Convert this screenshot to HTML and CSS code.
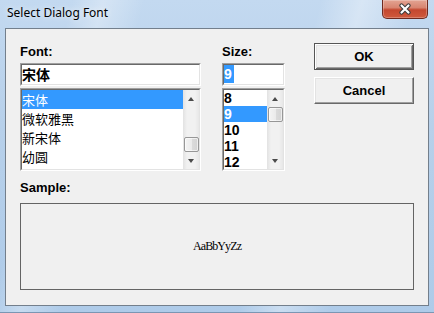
FILE: index.html
```html
<!DOCTYPE html>
<html lang="en">
<head>
  <meta charset="UTF-8" />
  <title>Select Dialog Font</title>
  <link rel="stylesheet" href="styles.css">
</head>
<body>
  <div class="window">
    <div class="titlebar">
      <span class="title">Select Dialog Font</span>
      <div class="close-btn">
        <svg width="14" height="12" viewBox="0 0 14 12">
          <path d="M3.5 2.5 L10.5 9.5 M10.5 2.5 L3.5 9.5" stroke="#3a3a3a" stroke-width="4.2" stroke-linecap="round" fill="none"/>
          <path d="M3.5 2.5 L10.5 9.5 M10.5 2.5 L3.5 9.5" stroke="#fff" stroke-width="2.2" stroke-linecap="round" fill="none"/>
        </svg>
      </div>
    </div>

    <div class="client">
      <div class="top-row">
        <div class="font-col">
          <div class="field-label">Font:</div>
          <div class="sunken edit">
            <div class="sunken-inner cjk-edit">宋体</div>
          </div>
          <div class="sunken listbox">
            <div class="sunken-inner">
              <ul class="items font-items">
                <li class="selected">宋体</li>
                <li>微软雅黑</li>
                <li>新宋体</li>
                <li>幼圆</li>
              </ul>
              <div class="scrollbar">
                <div class="sb-btn up"></div>
                <div class="sb-track at-end"><div class="thumb"></div></div>
                <div class="sb-btn down"></div>
              </div>
            </div>
          </div>
        </div>

        <div class="size-col">
          <div class="field-label">Size:</div>
          <div class="sunken edit">
            <div class="sunken-inner num-edit"><span class="sel-text">9</span></div>
          </div>
          <div class="sunken listbox">
            <div class="sunken-inner">
              <ul class="items size-items">
                <li>8</li>
                <li class="selected">9</li>
                <li>10</li>
                <li>11</li>
                <li>12</li>
              </ul>
              <div class="scrollbar">
                <div class="sb-btn up"></div>
                <div class="sb-track"><div class="thumb"></div></div>
                <div class="sb-btn down"></div>
              </div>
            </div>
          </div>
        </div>

        <div class="button-col">
          <button class="btn default">OK</button>
          <button class="btn">Cancel</button>
        </div>
      </div>

      <div class="field-label sample-label">Sample:</div>
      <div class="sample-box">AaBbYyZz</div>
    </div>
  </div>
</body>
</html>
```

FILE: styles.css
```css
* {
  box-sizing: border-box;
  margin: 0;
  padding: 0;
}

html, body {
  width: 434px;
  height: 313px;
  overflow: hidden;
}

body {
  font-family: "Liberation Sans", Arial, sans-serif;
  background: #b8d1ec;
  color: #000;
}

.window {
  width: 434px;
  height: 313px;
  display: flex;
  flex-direction: column;
  background:
    linear-gradient(105deg, transparent 14%, rgba(255,255,255,0.3) 20%, transparent 28%,
                    transparent 62%, rgba(255,255,255,0.35) 70%, transparent 80%),
    linear-gradient(180deg, #c3d9f0 0%, #b7d0ea 40%, #aecbe9 100%);
  box-shadow: inset 0 -1px 0 #7b96b3;
}

/* title bar */

.titlebar {
  height: 28px;
  display: flex;
  justify-content: space-between;
  align-items: flex-start;
  padding: 0 6px 0 7px;
}

.title {
  font-family: "Noto Sans", "Open Sans", sans-serif;
  font-size: 12px;
  line-height: 16px;
  margin-top: 5px;
  text-shadow: 0 0 6px rgba(255, 255, 255, 0.9);
}

.close-btn {
  width: 46px;
  height: 19px;
  border: 1px solid #6e2a20;
  border-top: none;
  border-radius: 0 0 5px 5px;
  background: linear-gradient(180deg, #e3a493 0%, #d88571 42%, #c4472f 55%, #cf5a3d 100%);
  box-shadow: inset 0 0 0 1px rgba(255, 255, 255, 0.25);
  display: flex;
  align-items: center;
  justify-content: center;
}

/* client area */

.client {
  height: 278px;
  margin: 0 5px;
  border: 1px solid #737f8c;
  background: #f0f0f0;
  padding: 14px 14px 0 14px;
}

.top-row {
  display: flex;
}

.font-col {
  width: 181px;
}

.size-col {
  width: 63px;
  margin-left: 21px;
}

.button-col {
  width: 100px;
  margin-left: 29px;
  display: flex;
  flex-direction: column;
  gap: 7px;
}

.field-label {
  font-weight: bold;
  font-size: 13px;
  line-height: 18px;
  margin-bottom: 2px;
}

/* sunken 3d boxes */

.sunken {
  border: 1px solid;
  border-color: #a0a0a0 #fff #fff #a0a0a0;
  background: #fff;
}

.sunken-inner {
  height: 100%;
  border: 1px solid;
  border-color: #696969 #e3e3e3 #e3e3e3 #696969;
}

.edit {
  height: 23px;
  margin-bottom: 2px;
}

.cjk-edit {
  font-family: "Noto Sans CJK SC", sans-serif;
  font-weight: bold;
  font-size: 14px;
  line-height: 19px;
}

.num-edit {
  font-weight: bold;
  font-size: 14px;
  line-height: 18px;
}

.sel-text {
  display: inline-block;
  background: #3399ff;
  color: #fff;
  padding-right: 2px;
}

.listbox {
  height: 83px;
}

.listbox .sunken-inner {
  display: flex;
  overflow: hidden;
}

.items {
  flex: 1;
  list-style: none;
}

.font-items li {
  height: 19px;
  line-height: 19px;
  font-family: "Noto Sans CJK SC", sans-serif;
  font-size: 13px;
  overflow: hidden;
}

.size-items li {
  height: 16px;
  line-height: 16px;
  font-weight: bold;
  font-size: 14px;
}

.items .selected {
  background: #3399ff;
  color: #fff;
}

/* scrollbar */

.scrollbar {
  width: 16px;
  display: flex;
  flex-direction: column;
  background: linear-gradient(90deg, #e2e2e2 0%, #f1f1f1 25%, #f1f1f1 75%, #e7e7e7 100%);
}

.sb-btn {
  height: 17px;
  display: flex;
  align-items: center;
  justify-content: center;
}

.sb-btn::before {
  content: '';
  border-left: 3.5px solid transparent;
  border-right: 3.5px solid transparent;
}

.sb-btn.up::before {
  border-bottom: 4px solid #4a4a4a;
}

.sb-btn.down::before {
  border-top: 4px solid #4a4a4a;
}

.sb-track {
  flex: 1;
  display: flex;
  flex-direction: column;
}

.sb-track.at-end {
  justify-content: flex-end;
}

.thumb {
  height: 15px;
  margin-left: 1px;
  border: 1px solid #979797;
  border-radius: 2px;
  background: linear-gradient(90deg, #f4f4f4 0%, #ebebeb 50%, #dbdbdb 52%, #d3d3d3 100%);
  box-shadow: inset 0 0 0 1px rgba(255, 255, 255, 0.6);
}

/* push buttons */

.btn {
  height: 27px;
  font-family: "Liberation Sans", Arial, sans-serif;
  font-weight: bold;
  font-size: 13px;
  background: #f0f0f0;
  color: #000;
  border: 1px solid;
  border-color: #fff #696969 #696969 #fff;
  box-shadow: inset -1px -1px 0 #a0a0a0, inset 1px 1px 0 #e3e3e3;
}

.btn.default {
  border: 1px solid #555;
  box-shadow: inset 1px 1px 0 #fff, inset -1px -1px 0 #696969,
              inset 2px 2px 0 #e3e3e3, inset -2px -2px 0 #a0a0a0;
}

/* sample */

.sample-label {
  margin-top: 8px;
  margin-bottom: 6px;
}

.sample-box {
  height: 87px;
  border: 1px solid #646464;
  display: flex;
  align-items: center;
  justify-content: center;
  font-family: "Liberation Serif", "Times New Roman", serif;
  font-size: 12px;
  letter-spacing: -0.9px;
}
```
